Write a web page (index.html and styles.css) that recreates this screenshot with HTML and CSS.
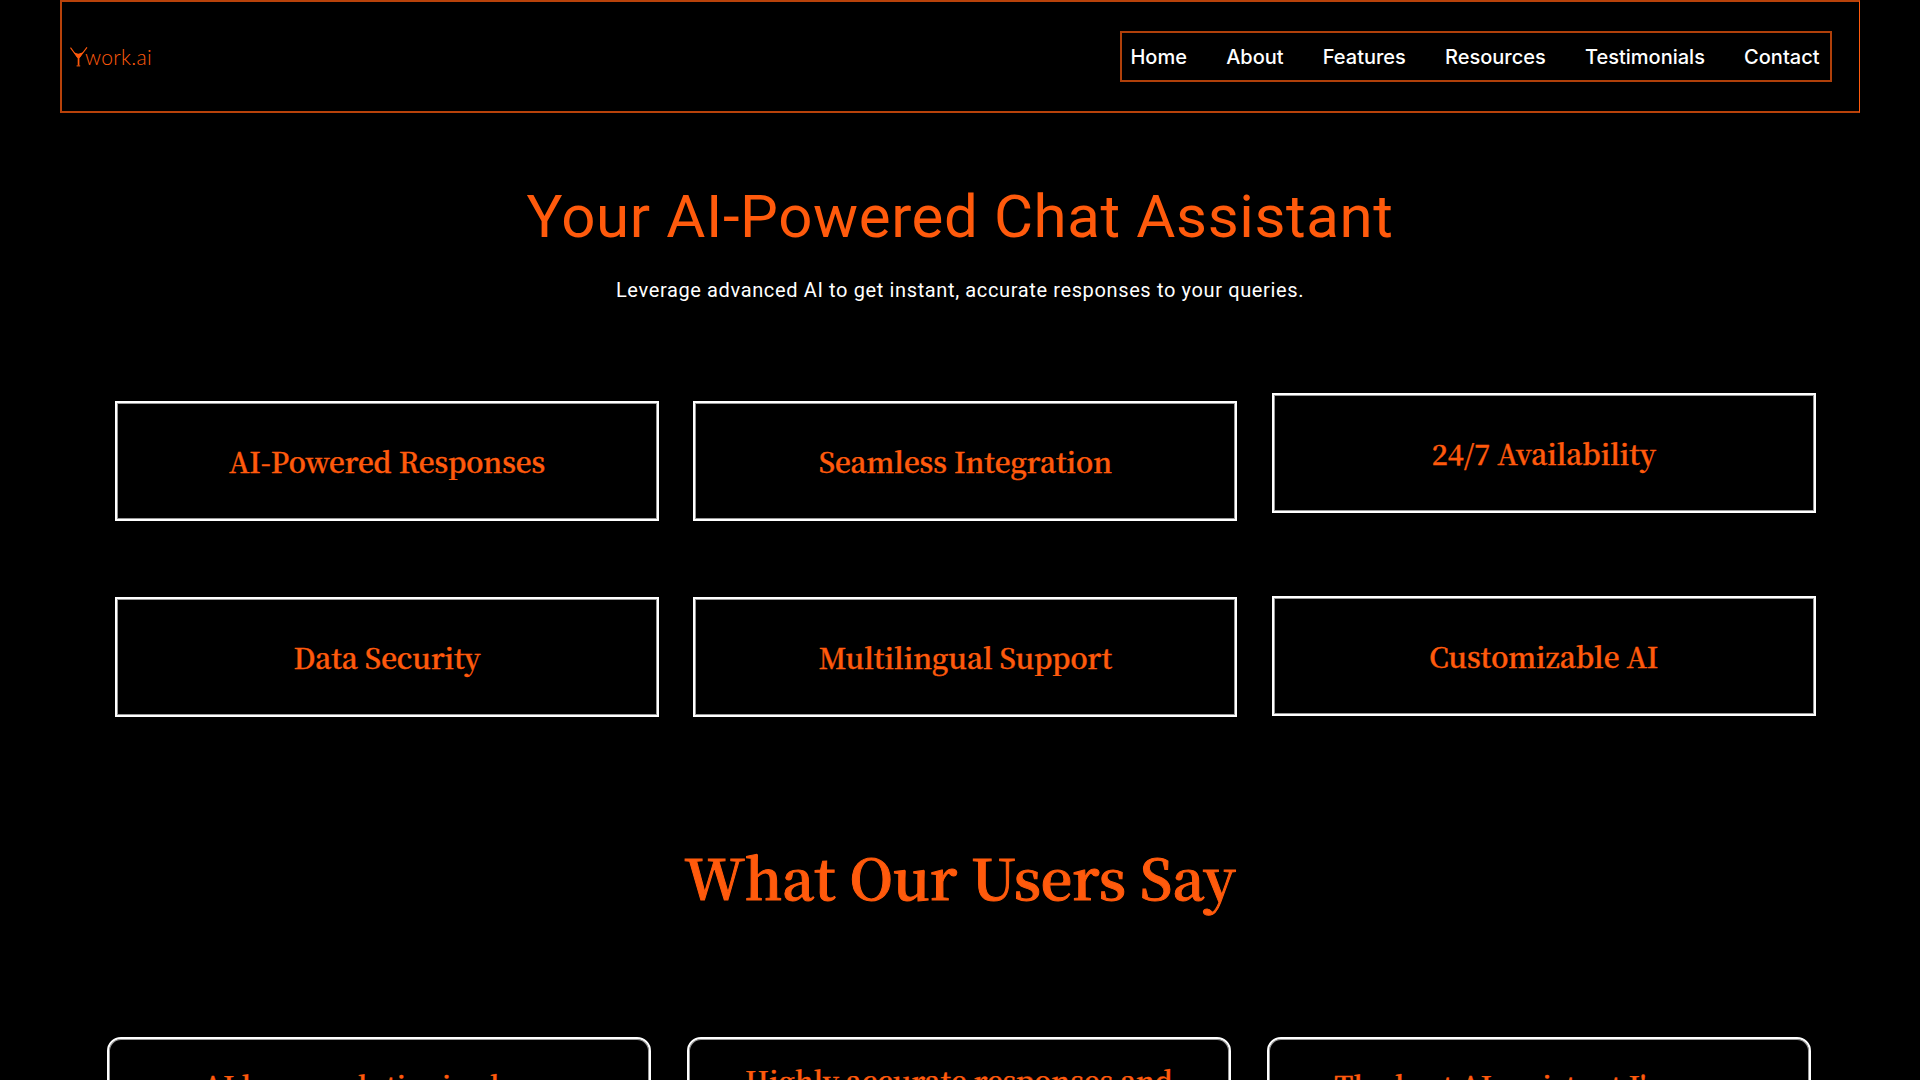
FILE: index.html
```
<!DOCTYPE html>
<html lang="en">
<head>
<meta charset="utf-8">
<title>Ywork.ai</title>
<link rel="stylesheet" href="styles.css">
</head>
<body>
<header class="header">
  <a class="logo" aria-label="Ywork.ai">
    <svg class="logo-mark" viewBox="0 0 18 20" width="18" height="20">
      <path d="M.5.7 7.7 10.5M17 .3 9.3 10.5" fill="none" stroke="#ff5a0c" stroke-width="1.1"/>
      <path d="M3.6 5.2 8.2 6.8 13.4 5.2 9.4 11.2V18.6H7.7V11.2Z" fill="#ff5a0c"/>
      <path d="M6.6 18.9H10.2" stroke="#ff5a0c"/>
    </svg>
    <span class="logo-text">work.ai</span>
  </a>
  <nav class="nav">
    <a>Home</a><a>About</a><a>Features</a><a>Resources</a><a>Testimonials</a><a>Contact</a>
  </nav>
</header>
<main>
  <section class="hero">
    <h1>Your AI-Powered Chat Assistant</h1>
    <p>Leverage advanced AI to get instant, accurate responses to your queries.</p>
  </section>
  <section class="features">
    <div class="card">AI-Powered Responses</div>
    <div class="card">Seamless Integration</div>
    <div class="card card-high">24/7 Availability</div>
    <div class="card">Data Security</div>
    <div class="card">Multilingual Support</div>
    <div class="card card-raised">Customizable AI</div>
  </section>
  <h2>What Our Users Say</h2>
  <section class="testimonials">
    <blockquote class="quote">AI has revolutionized our</blockquote>
    <blockquote class="quote quote-long">Highly accurate responses and</blockquote>
    <blockquote class="quote">The best AI assistant I've ever</blockquote>
  </section>
</main>
</body>
</html>
```
FILE: styles.css
```
* { box-sizing: border-box; }
html, body { height: 100%; }
body {
  margin: 0;
  overflow: hidden;
  background: #000;
  color: #fff;
  font-family: Roboto, sans-serif;
}
.header {
  display: flex;
  align-items: center;
  justify-content: space-between;
  width: 1800px;
  height: 113px;
  margin: 0 auto;
  padding: 0 27px 0 8px;
  border: 2px solid #b8420a;
  border-right: 1px solid #ff5a0c;
}
.logo { display: flex; align-items: flex-start; height: 20px; }
.logo-mark { display: block; }
.logo-text {
  margin-left: -3px;
  color: #ff5a0c;
  font: 300 21px/20px Lato, sans-serif;
  letter-spacing: .3px;
}
.nav {
  display: flex;
  align-items: center;
  gap: 39.2px;
  height: 51px;
  padding: 0 10.5px 0 8px;
  border: 2px solid #b0400a;
  font: 500 20px/24px Inter, sans-serif;
}
.hero { text-align: center; }
h1 {
  margin: 69px 0 0;
  color: #ff5a0c;
  font-weight: 400;
  font-size: 60px;
  line-height: 70px;
  letter-spacing: .62px;
}
.hero p {
  margin: 26px 0 0;
  font-size: 20px;
  line-height: 24px;
  letter-spacing: .63px;
}
.features {
  display: grid;
  grid-template-columns: repeat(3, 544px);
  gap: 76px 34.4px;
  margin: 99px 0 0 115px;
}
.card {
  height: 120px;
  border: 2px solid #fff;
  box-shadow: inset 0 0 0 1px #999;
  color: #ff5a0c;
  font: 600 28px/116px "Noto Serif CJK SC", "DejaVu Serif Condensed", serif;
  letter-spacing: -.05px;
  text-align: center;
  -webkit-text-stroke: .4px #ff5a0c;
}
.card-high { margin-top: -8px; }
.card-raised { margin-top: -1px; }
h2 {
  margin: 119px 0 0;
  color: #ff5a0c;
  font: 600 56px/80px "Noto Serif CJK SC", "DejaVu Serif Condensed", serif;
  letter-spacing: -.15px;
  text-align: center;
  -webkit-text-stroke: 1px #ff5a0c;
}
.testimonials {
  display: grid;
  grid-template-columns: repeat(3, 544px);
  gap: 36px;
  margin: 121px 0 0 107px;
}
.quote {
  height: 160px;
  margin: 0;
  padding-top: 26px;
  border: 2px solid #fff;
  border-radius: 14px;
  box-shadow: inset 0 0 0 1px #999;
  color: #ff5a0c;
  font: 600 28px/40px "Noto Serif CJK SC", "DejaVu Serif Condensed", serif;
  letter-spacing: -.05px;
  text-align: center;
  -webkit-text-stroke: .3px #ff5a0c;
}
.quote-long { padding-top: 21px; }
```
